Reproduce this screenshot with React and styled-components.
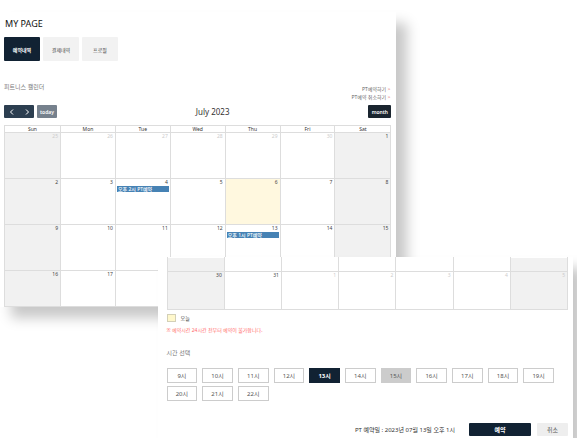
import React, { useState } from "react";
import styled, { createGlobalStyle, css } from "styled-components";

const GlobalStyle = createGlobalStyle`
  * { box-sizing: border-box; }
  body {
    margin: 0;
    background: #fff;
    color: #333;
    font-family: "Noto Sans", "Noto Sans CJK KR", sans-serif;
    font-size: 6px;
    line-height: 8px;
  }
  button { font-family: inherit; margin: 0; padding: 0; cursor: pointer; }
`;

const Page = styled.div`
  padding-top: 12px;
`;

const Panel = styled.section`
  background: #fff;
  box-shadow: 11px 11px 12px rgba(0, 0, 0, 0.22);
`;

const CalendarPanel = styled(Panel).attrs({ as: "main" })`
  width: 68.7%;
  padding: 4px 5px 0 4px;
`;

const BookingPanel = styled(Panel)`
  position: relative;
  width: 72%;
  margin: -50px 4px 0 auto;
  padding: 0 5px 3px 9px;
`;

const PageTitle = styled.h1`
  margin: 0;
  padding-left: 1px;
  font-size: 9px;
  line-height: 16px;
  font-weight: 400;
  color: #111;
`;

const Tabs = styled.nav`
  display: flex;
  gap: 3px;
  margin-top: 5px;
`;

const Tab = styled.button`
  width: 36px;
  height: 24px;
  border: 0;
  border-radius: 1px;
  font-size: 5px;
  font-weight: ${(p) => (p.$active ? 700 : 400)};
  color: ${(p) => (p.$active ? "#fff" : "#444")};
  background: ${(p) => (p.$active ? "#112233" : "#f2f2f2")};
`;

const SectionTitle = styled.h2`
  margin: 0;
  font-size: 6px;
  line-height: 8px;
  font-weight: 400;
  color: #777;
`;

const CalendarHead = styled.div`
  display: flex;
  justify-content: space-between;
  margin-top: 22px;
`;

const Links = styled.div`
  display: flex;
  flex-direction: column;
  align-items: flex-end;
  padding: 2px 1px 1px 0;
`;

const TextLink = styled.a`
  color: #666;
  font-size: 5px;
  line-height: 8px;
  text-decoration: none;
  span { color: #d66; }
`;

const Toolbar = styled.div`
  display: flex;
  justify-content: space-between;
  align-items: center;
  margin: 3px 0 7px;
`;

const ToolGroup = styled.div`
  display: flex;
  gap: 3px;
`;

const Arrows = styled.div`
  display: flex;
  border-radius: 1px;
  overflow: hidden;
`;

const ToolButton = styled.button`
  display: grid;
  place-items: center;
  width: ${(p) => p.$width}px;
  height: 13px;
  border: 0;
  border-radius: 1px;
  color: #fff;
  font-size: 5px;
  font-weight: 600;
  background: ${(p) => p.$tone};
`;

const ArrowButton = styled(ToolButton)`
  border-radius: 0;
`;

const MonthTitle = styled.h2`
  margin: 0;
  font-size: 8px;
  line-height: 13px;
  font-weight: 400;
  color: #333;
`;

const Calendar = styled.table`
  width: 100%;
  table-layout: fixed;
  border-collapse: collapse;
  border: 1px solid #ddd;
`;

const WeekDay = styled.th`
  height: 7px;
  padding: 0;
  border: 1px solid #ddd;
  font-size: 5px;
  line-height: 6px;
  font-weight: 400;
  &:first-child, &:last-child { width: 56px; }
`;

const Week = styled.tr`
  height: ${(p) => p.$height}px;
`;

const Day = styled.td`
  padding: 0 1px;
  vertical-align: top;
  border: 1px solid #ddd;
  background: ${(p) => (p.$today ? "#fff8df" : p.$weekend ? "#f1f1f1" : "#fff")};
  ${(p) => p.$open && css`border-top-color: transparent;`}
`;

const DayNumber = styled.div`
  padding-right: 1px;
  font-size: 5px;
  line-height: 6px;
  text-align: right;
  color: ${(p) => (p.$muted ? "#ccc" : "#444")};
`;

const Event = styled.div`
  height: 6px;
  margin-top: 1px;
  padding-left: 1px;
  font-size: 5px;
  line-height: 6px;
  font-weight: 500;
  white-space: nowrap;
  overflow: hidden;
  color: #fff;
  background: #4682b4;
`;

const Legend = styled.div`
  display: flex;
  align-items: center;
  gap: 5px;
  margin-top: 4px;
  font-size: 5px;
`;

const Swatch = styled.span`
  width: 9px;
  height: 8px;
  border: 1px solid #d3d0b8;
  background: #fff8cc;
`;

const Notice = styled.p`
  margin: 4px 0 15px;
  font-size: 5px;
  line-height: 8px;
  color: #ff6b6b;
`;

const Times = styled.div`
  display: grid;
  grid-template-columns: repeat(11, 1fr);
  gap: 3px 5px;
  margin: 11px 14px 0 0;
`;

const TimeButton = styled.button`
  height: 15px;
  border: 1px solid #ccc;
  font-size: 6px;
  line-height: 12px;
  color: #555;
  background: #fff;
  &:disabled { background: #ccc; cursor: default; }
  ${(p) => p.$selected && css`
    border-color: #112233;
    background: #112233;
    color: #fff;
    font-weight: 700;
  `}
`;

const Footer = styled.footer`
  display: flex;
  justify-content: flex-end;
  align-items: center;
  gap: 6px;
  margin-top: 22px;
`;

const Summary = styled.span`
  margin-right: 8px;
  font-size: 6px;
`;

const FooterButton = styled.button`
  width: ${(p) => (p.$primary ? 62 : 31)}px;
  height: 13px;
  border: 0;
  border-radius: 1px;
  font-size: 6px;
  font-weight: ${(p) => (p.$primary ? 700 : 400)};
  color: ${(p) => (p.$primary ? "#fff" : "#555")};
  background: ${(p) => (p.$primary ? "#112233" : "#eee")};
`;

const Chevron = ({ d }) => (
  <svg width="6" height="6" viewBox="0 0 6 6" fill="none" stroke="#fff" aria-hidden="true">
    <path d={d} />
  </svg>
);

const weekDays = ["Sun", "Mon", "Tue", "Wed", "Thu", "Fri", "Sat"];
const events = { 4: "오후 2시 PT예약", 13: "오후 1시 PT예약" };
const weeks = [
  { height: 46, muted: true, days: [25, 26, 27, 28, 29, 30, 1] },
  { height: 46, days: [2, 3, 4, 5, 6, 7, 8] },
  { height: 46, days: [9, 10, 11, 12, 13, 14, 15] },
  { height: 36, days: [16, 17, 18, 19, 20, 21, 22] },
];
const hours = [9, 10, 11, 12, 13, 14, 15, 16, 17, 18, 19, 20, 21, 22];
const lastWeek = [30, 31, 1, 2, 3, 4, 5];

export default function App() {
  const [tab, setTab] = useState("예약내역");
  const [hour, setHour] = useState(13);

  return (
    <>
      <GlobalStyle />
      <Page>
        <CalendarPanel>
          <PageTitle>MY PAGE</PageTitle>
          <Tabs>
            {["예약내역", "결제내역", "프로필"].map((name) => (
              <Tab key={name} $active={name === tab} onClick={() => setTab(name)}>{name}</Tab>
            ))}
          </Tabs>
          <CalendarHead>
            <SectionTitle>피트니스 캘린더</SectionTitle>
            <Links>
              <TextLink href="#book">PT예약하기 <span>&gt;</span></TextLink>
              <TextLink href="#cancel">PT예약 취소하기 <span>&gt;</span></TextLink>
            </Links>
          </CalendarHead>
          <Toolbar>
            <ToolGroup>
              <Arrows>
                <ArrowButton $width={15} $tone="#2c3e50" aria-label="Previous month">
                  <Chevron d="M4 0.5 1.5 3 4 5.5" />
                </ArrowButton>
                <ArrowButton $width={15} $tone="#2c3e50" aria-label="Next month">
                  <Chevron d="M2 0.5 4.5 3 2 5.5" />
                </ArrowButton>
              </Arrows>
              <ToolButton $width={20} $tone="#76818d">today</ToolButton>
            </ToolGroup>
            <MonthTitle>July 2023</MonthTitle>
            <ToolGroup>
              <ToolButton $width={23} $tone="#1a252f">month</ToolButton>
            </ToolGroup>
          </Toolbar>
          <Calendar>
            <thead>
              <tr>{weekDays.map((d) => <WeekDay key={d} scope="col">{d}</WeekDay>)}</tr>
            </thead>
            <tbody>
              {weeks.map((week) => (
                <Week key={week.days[0]} $height={week.height}>
                  {week.days.map((d, i) => (
                    <Day key={d} $weekend={i === 0 || i === 6} $today={d === 6}>
                      <DayNumber $muted={week.muted && d > 1}>{d}</DayNumber>
                      {events[d] && <Event>{events[d]}</Event>}
                    </Day>
                  ))}
                </Week>
              ))}
            </tbody>
          </Calendar>
        </CalendarPanel>

        <BookingPanel>
          <Calendar>
            <tbody>
              <Week $height={14}>
                {weekDays.map((d, i) => <Day key={d} $open $weekend={i === 0 || i === 6} />)}
              </Week>
              <Week $height={38}>
                {lastWeek.map((d, i) => (
                  <Day key={d} $weekend={i === 0 || i === 6}>
                    <DayNumber $muted={d < 30}>{d}</DayNumber>
                  </Day>
                ))}
              </Week>
            </tbody>
          </Calendar>
          <Legend><Swatch />오늘</Legend>
          <Notice>※ 예약시간 24시간 전부터 예약이 불가합니다.</Notice>
          <SectionTitle>시간 선택</SectionTitle>
          <Times>
            {hours.map((h) => (
              <TimeButton key={h} $selected={h === hour} disabled={h === 15} onClick={() => setHour(h)}>
                {h}시
              </TimeButton>
            ))}
          </Times>
          <Footer>
            <Summary>PT 예약일 : 2023년 07월 13일 오후 1시</Summary>
            <FooterButton $primary>예약</FooterButton>
            <FooterButton>취소</FooterButton>
          </Footer>
        </BookingPanel>
      </Page>
    </>
  );
}
